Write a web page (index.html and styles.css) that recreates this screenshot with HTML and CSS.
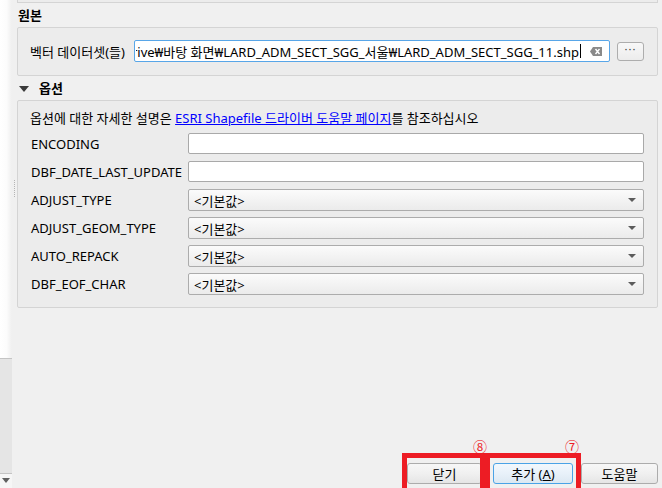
FILE: index.html
```html
<!DOCTYPE html>
<html lang="ko">
<head>
<meta charset="utf-8">
<title>벡터 레이어 추가</title>
<link rel="stylesheet" href="styles.css">
</head>
<body>
<div class="app">
  <aside class="side">
    <div class="side-top"></div>
    <div class="side-panel"></div>
    <div class="side-foot">
      <svg class="side-arrow" width="8" height="5" viewBox="0 0 8 5"><path d="M0 0H8L4 5Z" fill="#606060"/></svg>
    </div>
  </aside>
  <div class="grip"><div class="grip-dots"></div></div>
  <main class="content">
    <div class="topbox"></div>
    <div class="title">원본</div>
    <div class="box box-src">
      <span class="src-label">벡터 데이터셋(들)</span>
      <div class="path-input">
        <div class="path-clip"><span class="path-text">rive₩바탕 화면₩LARD_ADM_SECT_SGG_서울₩LARD_ADM_SECT_SGG_11.shp</span><span class="caret"></span></div>
        <svg class="clear-icon" width="12" height="9" viewBox="0 0 12 9"><path d="M3 0H12V9H3L0 4.5Z" fill="#8a8a8a"/><path d="M5.5 2L9.5 7M9.5 2L5.5 7" stroke="#fff" stroke-width="1.4"/></svg>
      </div>
      <button class="dots">···</button>
    </div>
    <div class="title title-opt">
      <svg class="tri" width="10" height="6" viewBox="0 0 10 6"><path d="M0 0H10L5 6Z" fill="#3a3a3a"/></svg>
      <span>옵션</span>
    </div>
    <div class="box box-opt">
      <p class="desc">옵션에 대한 자세한 설명은 <a href="#">ESRI Shapefile 드라이버 도움말 페이지</a>를 참조하십시오</p>
      <div class="opt-grid">
        <span class="opt-label">ENCODING</span>
        <div class="field"></div>
        <span class="opt-label">DBF_DATE_LAST_UPDATE</span>
        <div class="field"></div>
        <span class="opt-label">ADJUST_TYPE</span>
        <div class="combo"><span>&lt;기본값&gt;</span><svg width="8" height="4" viewBox="0 0 8 4"><path d="M0 0H8L4 4Z" fill="#5c5c5c"/></svg></div>
        <span class="opt-label">ADJUST_GEOM_TYPE</span>
        <div class="combo"><span>&lt;기본값&gt;</span><svg width="8" height="4" viewBox="0 0 8 4"><path d="M0 0H8L4 4Z" fill="#5c5c5c"/></svg></div>
        <span class="opt-label">AUTO_REPACK</span>
        <div class="combo"><span>&lt;기본값&gt;</span><svg width="8" height="4" viewBox="0 0 8 4"><path d="M0 0H8L4 4Z" fill="#5c5c5c"/></svg></div>
        <span class="opt-label">DBF_EOF_CHAR</span>
        <div class="combo"><span>&lt;기본값&gt;</span><svg width="8" height="4" viewBox="0 0 8 4"><path d="M0 0H8L4 4Z" fill="#5c5c5c"/></svg></div>
      </div>
    </div>
    <div class="buttons">
      <button class="btn btn-close">닫기</button>
      <button class="btn btn-add btn-default">추가 (<u>A</u>)</button>
      <button class="btn btn-help">도움말</button>
    </div>
  </main>
  <div class="mark mark-close"></div>
  <div class="mark mark-add"></div>
  <span class="num num-8">⑧</span>
  <span class="num num-7">⑦</span>
</div>
</body>
</html>
```

FILE: styles.css
```css
* { box-sizing: border-box; }
html, body { margin: 0; padding: 0; }
body {
  background: #f0f0f0;
  font-family: "Noto Sans", "Noto Sans CJK KR", sans-serif;
  font-size: 13px;
  color: #000;
  overflow: hidden;
}
.app {
  position: relative;
  display: flex;
  width: 662px;
  height: 488px;
  overflow: hidden;
}
.side {
  width: 12px;
  display: flex;
  flex-direction: column;
}
.side-top {
  height: 358px;
  background: linear-gradient(to right, #ffffff 0%, #fcfcfc 55%, #efefef 100%);
}
.side-panel {
  flex: 1;
  background: #e5e5e5;
  border-top: 1px solid #c4c4c4;
  border-bottom: 1px solid #c4c4c4;
}
.side-foot {
  height: 14px;
  background: #f6f6f6;
  display: flex;
  justify-content: center;
  padding-top: 4px;
}
.side-arrow { display: block; }
.grip {
  width: 5px;
  padding-top: 180px;
}
.grip-dots {
  width: 1px;
  height: 17px;
  margin-left: 2px;
  border-left: 1px dotted #b5b5b5;
}
.content {
  flex: 1;
  display: flex;
  flex-direction: column;
  padding-right: 4px;
}
.topbox {
  height: 3px;
  border: 1px solid #d4d4d4;
  border-top: 0;
  background: #ececec;
}
.title {
  height: 24px;
  line-height: 24px;
  font-weight: bold;
  font-size: 13px;
  padding-left: 1px;
  display: flex;
  align-items: center;
}
.title-opt { padding-left: 2px; }
.tri { margin-right: 10px; margin-top: 1px; }
.box {
  border: 1px solid #d4d4d4;
  border-radius: 2px;
  background: #ececec;
}
.box-src {
  display: flex;
  align-items: center;
  padding: 12px 13px 13px 12px;
}
.src-label {
  width: 104px;
  flex-shrink: 0;
  white-space: nowrap;
}
.path-input {
  width: 476px;
  height: 22px;
  display: flex;
  align-items: center;
  background: #fff;
  border: 1px solid #58a6e8;
  border-radius: 2px;
  padding: 0 7px 0 1px;
}
.path-clip {
  flex: 1;
  min-width: 0;
  overflow: hidden;
  display: flex;
  justify-content: flex-end;
  align-items: center;
  margin-right: 9px;
}
.path-text {
  flex-shrink: 0;
  white-space: nowrap;
}
.caret {
  flex-shrink: 0;
  width: 1px;
  height: 14px;
  background: #000;
  margin-left: 1px;
}
.clear-icon { flex-shrink: 0; }
.dots {
  margin-left: 7px;
  width: 27px;
  height: 19px;
  padding: 0 0 4px;
  border: 1px solid #adadad;
  border-radius: 3px;
  background: linear-gradient(#f8f8f8, #ececec);
  font: inherit;
  font-size: 11px;
  letter-spacing: 1px;
  color: #444;
  line-height: 12px;
}
.box-opt {
  padding: 7px 13px 12px 12px;
}
.desc {
  margin: 0 0 5px;
  height: 20px;
  line-height: 20px;
  white-space: nowrap;
}
.desc a { color: #0000ff; text-decoration: underline; }
.opt-grid {
  display: grid;
  grid-template-columns: 158px 1fr;
  grid-auto-rows: 22px;
  row-gap: 6px;
}
.opt-label {
  display: flex;
  align-items: center;
  white-space: nowrap;
  padding-left: 1px;
}
.field {
  background: #fff;
  border: 1px solid #a9a9a9;
  border-radius: 2px;
  height: 21px;
}
.combo {
  display: flex;
  align-items: center;
  justify-content: space-between;
  padding: 0 7px 0 5px;
  border: 1px solid #acacac;
  border-radius: 2px;
  background: linear-gradient(#fbfbfb, #ebebeb);
}
.buttons {
  margin-top: auto;
  margin-bottom: 4px;
  display: flex;
  justify-content: flex-end;
}
.btn {
  height: 21px;
  padding: 0;
  border: 1px solid #acacac;
  border-radius: 3px;
  background: linear-gradient(#f7f7f7 0%, #f0f0f0 50%, #e5e5e5 100%);
  font: inherit;
  font-size: 13px;
  color: #000;
  line-height: 18px;
}
.btn-close { width: 75px; margin-right: 11px; }
.btn-add { width: 80px; margin-right: 8px; }
.btn-help { width: 77px; }
.btn-default {
  border-color: #4aa3e6;
  background: linear-gradient(#f2f8fd 0%, #e8f1f9 50%, #dce8f2 100%);
}
.btn u { text-decoration: underline; text-underline-offset: 1px; }
.mark {
  position: absolute;
  top: 453px;
  height: 45px;
  border: 5px solid #ed1c24;
}
.mark-close { left: 402px; width: 83px; }
.mark-add { left: 485px; width: 96px; }
.num {
  position: absolute;
  top: 438px;
  width: 16px;
  height: 17px;
  line-height: 17px;
  text-align: center;
  color: #ed1c24;
  font-family: "Noto Sans CJK KR", sans-serif;
  font-size: 14px;
}
.num-8 { left: 472px; }
.num-7 { left: 564px; }
```
